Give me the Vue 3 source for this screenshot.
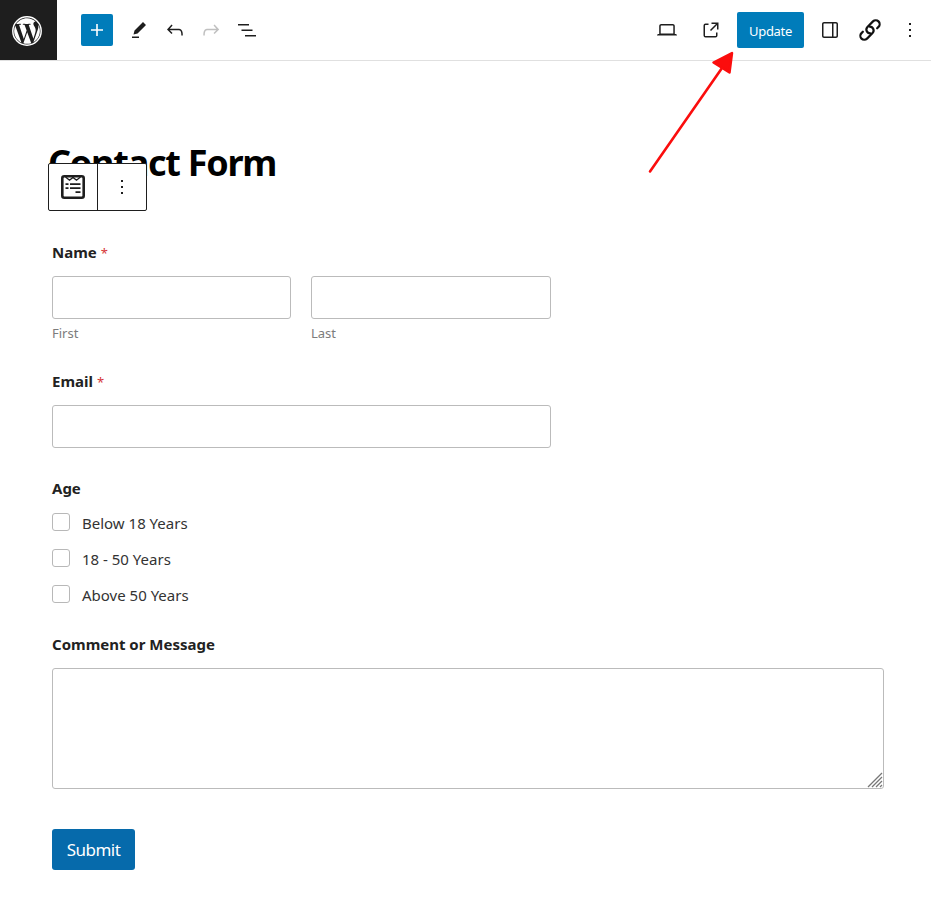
<script setup>
const undo = 'M18.3 11.7c-.6-.6-1.4-.9-2.3-.9H6.7l2.9-3.3-1.1-1-4.5 5L8.5 16l1-1-2.7-2.7H16c.5 0 .9.2 1.3.5 1 1 1 3.4 1 4.5v.3h1.5v-.2c0-1.5 0-4.3-1.5-5.7z'
const tools = [
  { name: 'edit', d: 'm19 7-3-3-8.5 8.5-1 4 4-1L19 7Zm-7 11.5H5V20h7v-1.5Z' },
  { name: 'undo', d: undo },
  { name: 'redo', muted: true, d: 'M15.6 6.5l-1.1 1 2.9 3.3H8c-.9 0-1.7.3-2.3.9-1.4 1.5-1.4 4.2-1.4 5.6v.2h1.5v-.3c0-1.1 0-3.5 1-4.5.3-.3.7-.5 1.3-.5h9.2L14.5 15l1.1 1.1 4.6-4.6-4.6-5z' },
  { name: 'list', d: 'M3 6h11v1.5H3V6Zm3.5 5.5h11V13h-11v-1.5ZM21 17H10v1.5h11V17Z' },
]
const dots = 'M13 19h-2v-2h2v2zm0-6h-2v-2h2v2zm0-6h-2V5h2v2z'
const ages = ['Below 18 Years', '18 - 50 Years', 'Above 50 Years']
</script>

<template>
  <div class="page">
    <header class="bar">
      <div class="brand">
        <svg width="30" height="30" viewBox="0 0 122.52 122.523"><circle cx="61.26" cy="61.26" r="58" fill="none" stroke="#fff" stroke-width="6" /><g fill="#fff"><path d="m8.708 61.26c0 20.802 12.089 38.779 29.619 47.298l-25.069-68.686c-2.916 6.536-4.55 13.769-4.55 21.388z"/><path d="m96.74 58.608c0-6.495-2.333-10.993-4.334-14.494-2.664-4.329-5.161-7.995-5.161-12.324 0-4.831 3.664-9.328 8.825-9.328.233 0 .454.029.681.042-9.35-8.566-21.807-13.796-35.489-13.796-18.36 0-34.513 9.42-43.91 23.688 1.233.037 2.395.063 3.382.063 5.497 0 14.006-.667 14.006-.667 2.833-.167 3.167 3.994.337 4.329 0 0-2.847.335-6.015.501l19.138 56.925 11.501-34.493-8.188-22.434c-2.83-.166-5.511-.501-5.511-.501-2.832-.166-2.5-4.496.332-4.329 0 0 8.679.667 13.843.667 5.496 0 14.006-.667 14.006-.667 2.835-.167 3.168 3.994.337 4.329 0 0-2.853.335-6.015.501l18.992 56.494 5.242-17.517c2.272-7.269 4.001-12.49 4.001-16.989z"/><path d="m62.184 65.857-15.768 45.819c4.708 1.384 9.687 2.141 14.846 2.141 6.12 0 11.989-1.058 17.452-2.979-.141-.225-.269-.464-.374-.724z"/><path d="m107.376 36.046c.226 1.674.354 3.471.354 5.404 0 5.333-.996 11.328-3.996 18.824l-16.053 46.413c15.624-9.111 26.133-26.038 26.133-45.426.001-9.137-2.333-17.729-6.438-25.215z"/></g></svg>
      </div>
      <button class="add"><svg class="i" viewBox="0 0 24 24"><path d="M18 11.2h-5.2V6h-1.6v5.2H6v1.6h5.2V18h1.6v-5.2H18z" /></svg></button>
      <div class="tools">
        <svg v-for="t in tools" :key="t.name" class="i" :class="{ muted: t.muted }" viewBox="0 0 24 24"><path :d="t.d" /></svg>
      </div>
      <div class="actions">
        <svg class="i" viewBox="0 0 24 24"><path d="M20.5 16h-.7V8c0-1.1-.9-2-2-2H6.2c-1.1 0-2 .9-2 2v8h-.7c-.8 0-1.5.7-1.5 1.5h20c0-.8-.7-1.5-1.5-1.5zM5.7 8c0-.3.2-.5.5-.5h11.6c.3 0 .5.2.5.5v7.6H5.7V8z" /></svg>
        <svg class="i ext" viewBox="0 0 24 24"><path d="M19.5 4.5h-7V6h4.44l-5.97 5.97 1.06 1.06L18 7.06v4.44h1.5v-7Zm-13 1a2 2 0 0 0-2 2v10a2 2 0 0 0 2 2h10a2 2 0 0 0 2-2v-3H17v3a.5.5 0 0 1-.5.5h-10a.5.5 0 0 1-.5-.5v-10a.5.5 0 0 1 .5-.5h3V5.5h-3Z" /></svg>
        <button class="update"><span>Update</span></button>
        <svg class="i side" viewBox="0 0 24 24"><path d="M18 4H6c-1.1 0-2 .9-2 2v12c0 1.1.9 2 2 2h12c1.1 0 2-.9 2-2V6c0-1.1-.9-2-2-2zm-4 14.5H6c-.3 0-.5-.2-.5-.5V6c0-.3.2-.5.5-.5h8v13zm4.5-.5c0 .3-.2.5-.5.5h-2.5v-13H18c.3 0 .5.2.5.5v12z" /></svg>
        <svg class="i chain" viewBox="0 0 24 24"><g transform="translate(12 12) rotate(-45)" fill="none" stroke="#111" stroke-width="2.2" stroke-linecap="round"><path d="M-2.2 2.5A3.8 3.8 0 0 1 .4 -4H8.2A3.9 3.9 0 0 1 8.200 3.800H6.300" /><path d="M2.2 -2.5A3.8 3.8 0 0 1 -.4 4H-8.2A3.9 3.9 0 0 1 -8.200 -3.800H-6.300" /></g></svg>
        <svg class="i" viewBox="0 0 24 24"><path :d="dots" /></svg>
      </div>
    </header>

    <main class="content">
      <h1><span>Contact Form</span></h1>
      <div class="block-bar">
        <div class="cell"><svg class="form-icon" viewBox="0 0 24 24"><rect x="1.3" y="1.3" width="21.4" height="21.4" rx="2" fill="none" stroke="#1e1e1e" stroke-width="2.6" /><path d="M4.5 2l4 3.2L12 2.4l3.5 2.8 4-3.2" fill="none" stroke="#1e1e1e" stroke-width="1.4" /><path d="M4.5 8.200h3V10h-3zM9 8.200h10.500V10H9zM4.500 12.200h3V14h-3zM9 12.200h10.500V14H9zM14.500 16.200h5V18h-5z" /></svg></div>
        <div class="cell"><svg class="i" viewBox="0 0 24 24"><path :d="dots" /></svg></div>
      </div>

      <form class="form" @submit.prevent>
        <div class="label name"><span class="w">Name</span><i>*</i></div>
        <div class="names">
          <div><div class="input"></div><div class="sub">First</div></div>
          <div><div class="input"></div><div class="sub">Last</div></div>
        </div>
        <div class="label email"><span class="w">Email</span><i>*</i></div>
        <div class="input wide"></div>
        <div class="label age">Age</div>
        <div class="options">
          <div v-for="a in ages" :key="a" class="option"><span class="box"></span><span class="text">{{ a }}</span></div>
        </div>
        <div class="label comment">Comment or Message</div>
        <div class="area">
          <svg width="16" height="16" viewBox="0 0 16 16"><path d="M1 15L15 1M5 15L15 5M9 15L15 9M13 15L15 13" stroke="#777" stroke-width="1.3" /></svg>
        </div>
        <button class="submit"><span>Submit</span></button>
      </form>
    </main>

    <svg class="arrow" width="100" height="130" viewBox="0 0 100 130"><path d="M10 121.500L82 18" stroke="#fb0d0d" stroke-width="2.600" stroke-linecap="round" /><path d="M92 3L89.500 22.500L73.500 12.500Z" fill="#fb0d0d" stroke="#fb0d0d" stroke-width="2.500" stroke-linejoin="round" /></svg>
  </div>
</template>

<style>
body { margin: 0; background: #fff; }
</style>

<style scoped>
.page { position: relative; width: 931px; height: 920px; overflow: hidden; background: #fff; color: #1e1e1e; font-family: "Noto Sans", "Open Sans", sans-serif; box-sizing: border-box; }
.page * { box-sizing: border-box; }
button { border: 0; padding: 0; font: inherit; display: flex; align-items: center; justify-content: center; }
.bar { display: flex; align-items: center; height: 61px; border-bottom: 1px solid #e0e0e0; }
.brand { width: 57px; height: 60px; background: #1e1e1e; display: flex; align-items: center; padding: 2px 0 0 12px; }
.i { width: 24px; height: 24px; fill: #1e1e1e; display: block; flex: none; }
.muted { fill: #c0c0c0; }
.add { width: 32px; height: 32px; margin-left: 24px; border-radius: 2px; background: #007cba; }
.add .i { fill: #fff; }
.tools { display: flex; gap: 12px; margin-left: 14px; }
.actions { display: flex; align-items: center; margin-left: auto; padding-right: 9px; }
.ext { margin-left: 20px; }
.update { width: 67px; height: 36px; margin-left: 14px; border-radius: 2px; background: #007cba; color: #fff; font-size: 13px; letter-spacing: -.3px; padding-top: 2px; }
.side { margin-left: 14px; }
.chain { margin: 0 16px; overflow: visible; }
.content { padding: 76px 48px 0; }
h1 { margin: 0; font-size: 36px; line-height: 51px; height: 50px; font-weight: 700; color: #000; white-space: nowrap; letter-spacing: -1.25px; }
.block-bar { position: absolute; left: 48px; top: 163px; display: flex; width: 99px; height: 48px; border: 1px solid #1e1e1e; border-radius: 2px; background: #fff; }
.cell { flex: 1; display: flex; align-items: center; justify-content: center; }
.cell + .cell { border-left: 1px solid #1e1e1e; }
.form-icon { width: 24px; height: 24px; fill: #1e1e1e; }
.form { padding: 53px 0 0 4px; }
.label { height: 24px; line-height: 24px; font-size: 15px; font-weight: 700; color: #222; white-space: nowrap; }
.label i { font-style: normal; font-weight: 400; color: #d63637; margin-left: 4px; font-size: 13px; }
.names { display: grid; grid-template-columns: 239px 240px; gap: 20px; width: 499px; margin-top: 12px; }
.input { height: 43px; border: 1px solid #bbb; border-radius: 3px; background: #fff; }
.sub { height: 18px; line-height: 18px; margin-top: 5px; font-size: 13px; color: #7c7c7c; }
.email { margin-top: 27px; }
.wide { width: 499px; margin-top: 12px; }
.age { margin-top: 28px; }
.options { margin-top: 5px; }
.option { display: flex; align-items: center; height: 36px; }
.box { width: 18px; height: 18px; border: 1px solid #b8b8b8; border-radius: 3px; margin: -3px 12px 0 0; }
.text { font-size: 15px; line-height: 20px; color: #333; }
.comment { margin-top: 19px; }
.area { width: 832px; height: 121px; margin-top: 12px; border: 1px solid #bbb; border-radius: 3px; display: flex; align-items: flex-end; justify-content: flex-end; }
.submit { width: 83px; height: 41px; margin-top: 40px; border-radius: 3px; background: #066aab; color: #fff; font-size: 17px; letter-spacing: -.5px; }
.arrow { position: absolute; left: 640px; top: 50px; }
</style>
